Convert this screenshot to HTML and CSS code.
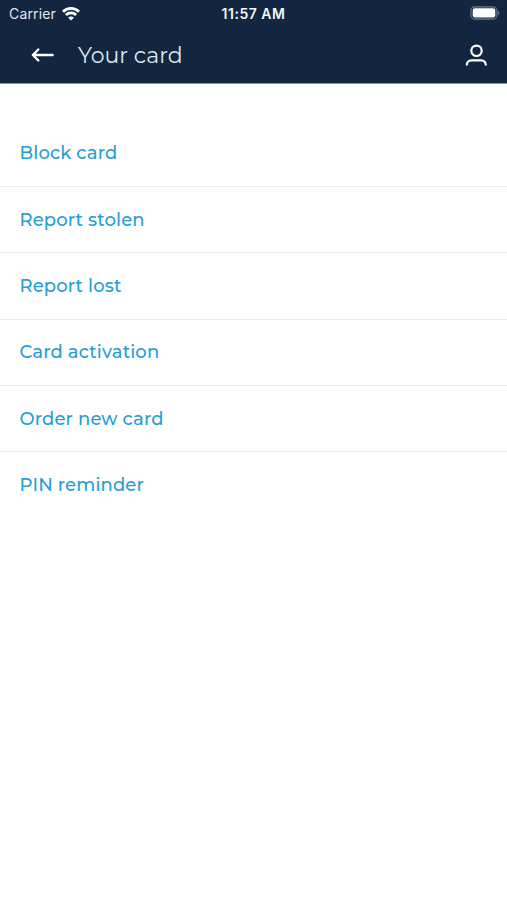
FILE: index.html
```html
<!DOCTYPE html>
<html lang="en">
<head>
<meta charset="utf-8">
<title>Your card</title>
<link rel="stylesheet" href="styles.css">
</head>
<body>
<header class="header">
  <div class="status">
    <div class="carrier"><span>Carrier</span>
      <svg width="18" height="14" viewBox="0 0 18 14"><path d="M1 4.700a11.500 11.500 0 0 1 16 0M3.900 7.900a7.400 7.400 0 0 1 10.200 0" fill="none" stroke="#fff" stroke-width="2.700"/><path d="M9 13.600L6.100 10.700a4 4 0 0 1 5.800 0z" fill="#fff"/></svg>
    </div>
    <div class="time">11:57 AM</div>
    <div class="power"><svg width="30" height="14" viewBox="0 0 30 14"><rect x=".9" y=".9" width="26" height="12.200" rx="4" fill="none" stroke="#566579" stroke-width="1.600"/><rect x="2.700" y="2.300" width="22.600" height="9.200" rx="2.200" fill="#fff"/><path d="M28 4.800q3 2.200 0 4.400z" fill="#667487"/></svg></div>
  </div>
  <div class="toolbar">
    <svg width="24" height="16" viewBox="0 0 24 16"><path d="M21.600 8H2M7.300 2.500L1.800 8l5.500 5.500" fill="none" stroke="#fff" stroke-width="2.400" stroke-linecap="round" stroke-linejoin="round"/></svg>
    <h1 class="title">Your card</h1>
    <svg width="22" height="22" viewBox="0 0 22 22"><circle cx="11.500" cy="6.800" r="5.200" fill="none" stroke="#fff" stroke-width="2.200"/><path d="M1.900 20.500a4.300 4.300 0 0 1 4.300-4.100h10.200a4.300 4.300 0 0 1 4.300 4.100" fill="none" stroke="#fff" stroke-width="2.300" stroke-linecap="round"/></svg>
  </div>
</header>
<nav class="menu">
  <a class="item">Block card</a>
  <a class="item">Report stolen</a>
  <a class="item">Report lost</a>
  <a class="item">Card activation</a>
  <a class="item">Order new card</a>
  <a class="item">PIN reminder</a>
</nav>
</body>
</html>
```

FILE: styles.css
```css
* { box-sizing: border-box; }
body { margin: 0; min-height: 900px; background: #fff; font-family: Montserrat, Inter, sans-serif; }
svg { display: block; flex: none; }
.header { height: 84px; background: #12263f; color: #fff; border-bottom: 1px solid #8a95a3; }
.status { height: 26px; display: grid; grid-template-columns: 1fr auto 1fr; align-items: center; padding: 0 7px 0 9px; font-family: Inter, sans-serif; font-size: 14px; }
.carrier { display: flex; align-items: center; gap: 6px; color: #e3e8ee; letter-spacing: .15px; }
.carrier, .time { padding-top: 1px; }
.time { font-weight: 600; color: #f2f5f8; letter-spacing: .5px; margin-left: -2px; }
.power { justify-self: end; }
.toolbar { height: 57px; display: flex; align-items: center; padding: 0 20px 0 31px; }
.title { flex: 1; margin: 0 0 0 23px; padding-top: 2px; font-size: 22px; font-weight: 400; color: #dce6ef; }
.menu { padding-top: 36.500px; }
.item { display: flex; align-items: center; height: 66.350px; padding-left: 19.500px; border-bottom: 1px solid #e9ebec; color: #289ed4; font-size: 18px; font-weight: 500; letter-spacing: .12px; }
.item:last-child { border-bottom: 0; }
```
